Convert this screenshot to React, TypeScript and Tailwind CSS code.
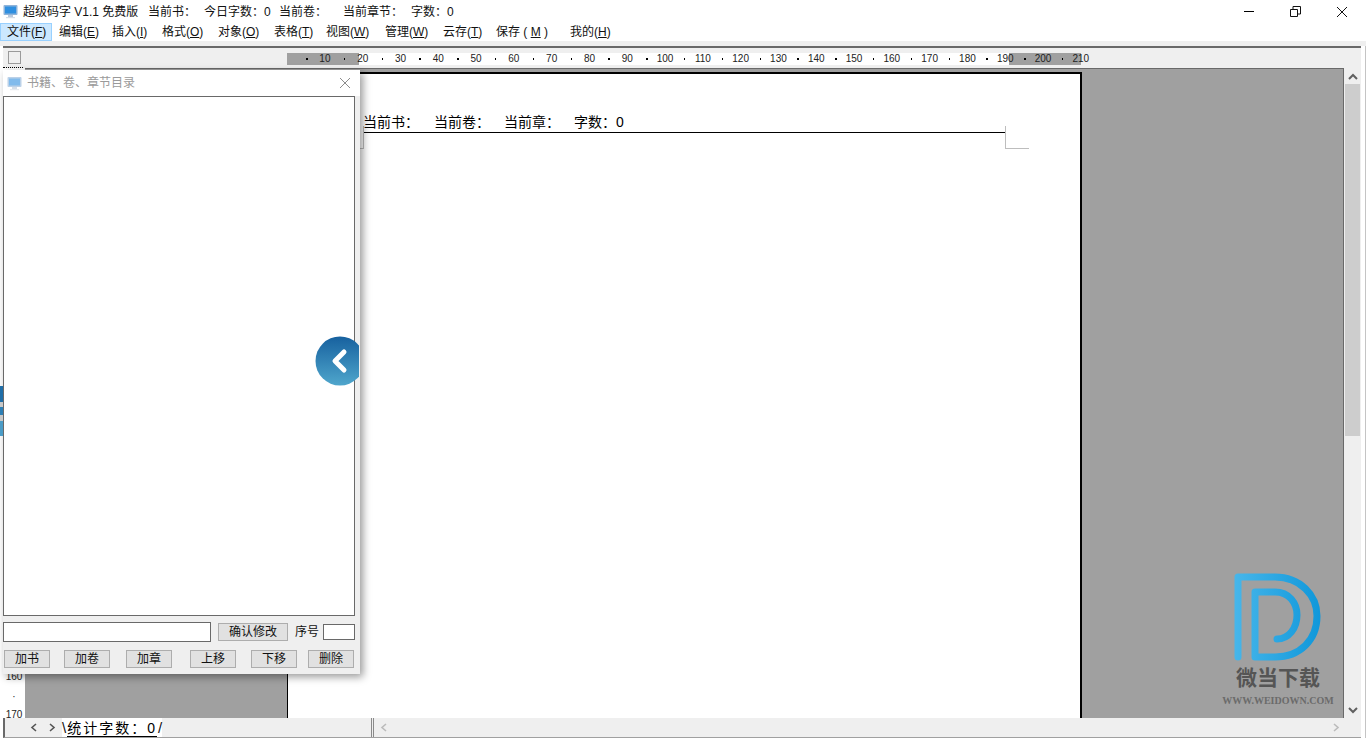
import React from 'react';

const menus = [
  { label: '文件', key: 'F', cls: 'w-[52px] pl-[6px] bg-[#cce8ff] border border-[#99d1ff]' },
  { label: '编辑', key: 'E', cls: 'w-[53px] ml-[7px]' },
  { label: '插入', key: 'I', cls: 'w-[50px]' },
  { label: '格式', key: 'O', cls: 'w-[56px]' },
  { label: '对象', key: 'O', cls: 'w-[56px]' },
  { label: '表格', key: 'T', cls: 'w-[52px]' },
  { label: '视图', key: 'W', cls: 'w-[59px]' },
  { label: '管理', key: 'W', cls: 'w-[58px]' },
  { label: '云存', key: 'T', cls: 'w-[53px]' },
  { label: '保存', key: 'M', cls: 'w-[74px]', spaced: true },
  { label: '我的', key: 'H', cls: 'w-[50px]' },
];

const rulerMarks = Array.from({ length: 21 }, (_, i) => (i + 1) * 10);
const panelButtons = [
  { label: '加书', cls: 'ml-px' },
  { label: '加卷', cls: 'ml-[14px]' },
  { label: '加章', cls: 'ml-[16px]' },
  { label: '上移', cls: 'ml-[18px]' },
  { label: '下移', cls: 'ml-[15px]' },
  { label: '删除', cls: 'ml-[11px]' },
];

function MonitorIcon({ faded }: { faded?: boolean }) {
  return (
    <svg width="15" height="15" viewBox="0 0 15 15" className={faded ? 'opacity-60' : ''}>
      <rect x="0.5" y="1" width="14" height="10" rx="1" fill="#8fb3d9" />
      <rect x="2" y="2.5" width="11" height="7" fill="#2f8fe0" />
      <rect x="5" y="11" width="5" height="2" fill="#b9c9dc" />
      <rect x="3" y="13" width="9" height="1.2" fill="#d5dde6" />
    </svg>
  );
}

function Ruler() {
  return (
    <div className="relative mt-[5px] h-[12px] w-[794px] bg-white">
      <div className="absolute left-0 top-0 h-full w-[72px] bg-[#a0a0a0]" />
      <div className="absolute left-[722px] top-0 h-full w-[72px] bg-[#a0a0a0]" />
      <div className="absolute left-[19px] top-0 flex h-full">
        {rulerMarks.map((n) => (
          <div key={n} className="relative flex w-[37.8px] justify-center text-[10px] leading-[12px] text-[#222]">
            <span className="absolute left-0 top-[5px] h-[2px] w-[1.5px] bg-black" />
            {n}
          </div>
        ))}
      </div>
    </div>
  );
}

function Panel() {
  return (
    <div className="absolute left-[3px] top-[70px] flex h-[604px] w-[357px] flex-col bg-[#efefef] shadow-[3px_3px_8px_rgba(0,0,0,0.4)]">
      <div className="flex h-[26px] items-center bg-white pl-[4px] pr-[9px] text-[12px] text-[#9a9a9a]">
        <MonitorIcon faded />
        <span className="ml-[5px] flex-1">书籍、卷、章节目录</span>
        <svg width="12" height="12" viewBox="0 0 12 12" stroke="#8c8c8c" strokeWidth="1">
          <path d="M1 1 L11 11 M11 1 L1 11" />
        </svg>
      </div>
      <div className="h-[520px] w-[352px] border border-[#696969] bg-white" />
      <div className="mt-[6px] flex h-[20px] items-center">
        <div className="h-[20px] w-[208px] border border-[#696969] bg-white" />
        <div className="ml-[7px] flex h-[18px] w-[70px] items-center justify-center border border-[#adadad] bg-[#e1e1e1] text-[12px] text-[#111]">
          确认修改
        </div>
        <span className="ml-[7px] text-[12px] text-[#111]">序号</span>
        <div className="ml-[4px] h-[16px] w-[32px] border border-[#696969] bg-white" />
      </div>
      <div className="mt-[7px] flex h-[18px] pt-px">
        {panelButtons.map((b) => (
          <div
            key={b.label}
            className={`flex h-[18px] w-[46px] items-center justify-center border border-[#adadad] bg-[#e1e1e1] text-[12px] text-[#111] ${b.cls}`}
          >
            {b.label}
          </div>
        ))}
      </div>
      <svg width="44" height="50" viewBox="0 0 44 50" className="absolute left-[312px] top-[266px]">
        <defs>
          <linearGradient id="circleFill" x1="0" y1="0" x2="0" y2="1">
            <stop offset="0" stopColor="#17619f" />
            <stop offset="1" stopColor="#4fa6cc" />
          </linearGradient>
        </defs>
        <circle cx="25" cy="25" r="24.5" fill="url(#circleFill)" />
        <path d="M29 16 L20 25 L29 34" fill="none" stroke="#fff" strokeWidth="5" strokeLinecap="round" strokeLinejoin="round" />
      </svg>
    </div>
  );
}

function Watermark() {
  return (
    <div className="absolute left-[1220px] top-[570px] flex w-[116px] flex-col items-center">
      <svg width="88" height="92" viewBox="0 0 88 92" fill="none">
        <defs>
          <linearGradient id="logoFill" gradientUnits="userSpaceOnUse" x1="0" y1="0" x2="88" y2="0">
            <stop offset="0" stopColor="#47b6ea" />
            <stop offset="1" stopColor="#0f97da" />
          </linearGradient>
        </defs>
        <path
          d="M4 87 V7 H41 C66 7 83 25 83 46 C83 70 66 87 41 87 H21 V22 H41 C55 22 63 33 63 45 C63 58 55 69 43 69"
          stroke="url(#logoFill)"
          strokeWidth="7"
          strokeLinecap="round"
          strokeLinejoin="round"
        />
      </svg>
      <span className="mt-[5px] text-[21px] font-bold leading-[22px] text-[#555]">微当下载</span>
      <span className="mt-[5px] whitespace-nowrap font-['Liberation_Serif',serif] text-[10px] font-bold leading-[13px] text-[#6b6b6b]">
        WWW.WEIDOWN.COM
      </span>
    </div>
  );
}

export default function App() {
  return (
    <div className="relative flex h-[738px] w-[1366px] flex-col overflow-hidden bg-white font-['Liberation_Sans','Noto_Sans_CJK_SC',sans-serif] text-[12px] text-[#111]">
      {/* title bar */}
      <div className="flex h-[23px] items-center pl-[3px]">
        <MonitorIcon />
        <span className="ml-[5px] w-[125px]">超级码字 V1.1 免费版</span>
        <span className="w-[56px]">当前书：</span>
        <span className="w-[75px]">今日字数：0</span>
        <span className="w-[64px]">当前卷：</span>
        <span className="w-[68px]">当前章节：</span>
        <span>字数：0</span>
        <div className="ml-auto flex items-center">
          <span className="h-px w-[10px] bg-black" />
          <svg width="11" height="11" viewBox="0 0 11 11" fill="none" stroke="#111" className="ml-[36px]">
            <path d="M0.5 3.5 H7.5 V10.5 H0.5 Z M3 3 V0.5 H10.5 V8 H8" />
          </svg>
          <svg width="12" height="12" viewBox="0 0 12 12" stroke="#111" className="ml-[35px] mr-[18px]">
            <path d="M1 1 L11 11 M11 1 L1 11" />
          </svg>
        </div>
      </div>

      {/* menu bar */}
      <div className="flex h-[18px] items-center">
        {menus.map((m) => (
          <div key={m.label} className={`flex h-[18px] shrink-0 items-center ${m.cls}`}>
            {m.label}
            {m.spaced ? (
              <span className="whitespace-pre">
                {' ( '}
                <u>{m.key}</u>
                {' )'}
              </span>
            ) : (
              <span>
                (<u>{m.key}</u>)
              </span>
            )}
          </div>
        ))}
      </div>

      {/* toolbar strip */}
      <div className="h-[5px] bg-[#efefef]" />

      {/* editor frame */}
      <div className="flex min-h-0 flex-1 flex-col border-r border-[#c4c4c4] pl-[3px] pr-[4px]">
        <div className="flex h-[22px] border-t-2 border-[#696969] bg-[#efefef]">
          <div className="h-full w-[20px] border-b border-dotted border-black pl-[5px]">
            <div className="mt-[3px] h-[13px] w-[13px] border border-[#9a9a9a] bg-[#efefef]" />
          </div>
          <div className="ml-[264px] flex">
            <Ruler />
          </div>
        </div>
        <div className="flex min-h-0 flex-1">
          {/* vertical ruler */}
          <div className="flex w-[22px] flex-col items-center justify-end bg-white text-[10px] leading-[10px] text-[#222]">
            <span className="mb-[10px]">160</span>
            <span className="mb-[8px]">·</span>
            <span className="mb-[-2px]">170</span>
          </div>
          {/* work area */}
          <div className="flex min-w-0 flex-1 border-r border-t border-[#696969] bg-[#a0a0a0] pl-[262px] pt-[3px]">
            <div className="h-[700px] w-[795px] border-l border-r-2 border-t-2 border-black bg-white pl-[75px] pt-[39px]">
              <div className="relative w-[642px] border-b border-black pb-[1px] text-[14px] leading-[18px] text-black">
                <div className="flex">
                  <span className="w-[71px]">当前书：</span>
                  <span className="w-[70px]">当前卷：</span>
                  <span className="w-[70px]">当前章：</span>
                  <span>字数：0</span>
                </div>
                <div className="absolute left-[642px] top-[13px] h-[23px] w-[24px] border-b border-l border-[#bdbdbd]" />
                <div className="absolute left-[-4px] top-[13px] h-[23px] w-[5px] border-b border-r border-[#bdbdbd]" />
              </div>
            </div>
          </div>
          {/* vertical scrollbar */}
          <div className="flex w-[17px] flex-col items-center bg-[#efefef] pl-px pr-px">
            <svg width="10" height="16" viewBox="0 0 10 16" fill="none" stroke="#606060" strokeWidth="2">
              <path d="M1 11 L5 7 L9 11" />
            </svg>
            <div className="h-[352px] w-full bg-[#cdcdcd]" />
            <svg width="10" height="16" viewBox="0 0 10 16" fill="none" stroke="#606060" strokeWidth="2" className="mt-auto">
              <path d="M1 6 L5 10 L9 6" />
            </svg>
          </div>
        </div>
        {/* bottom bar */}
        <div className="flex h-[20px] items-center border-b border-l-2 border-b-[#a0a0a0] border-l-[#696969] bg-[#efefef]">
          <svg width="8" height="9" viewBox="0 0 8 9" fill="none" stroke="#555" strokeWidth="1.6" className="ml-[25px]">
            <path d="M6 1 L2 4.5 L6 8" />
          </svg>
          <svg width="8" height="9" viewBox="0 0 8 9" fill="none" stroke="#555" strokeWidth="1.6" className="ml-[10px]">
            <path d="M2 1 L6 4.5 L2 8" />
          </svg>
          <div className="ml-[6px] flex h-[19px] items-center gap-px bg-white">
            <span className="text-[15px] font-light leading-none">\</span>
            <span className="border-b border-black pt-[2px] text-[14px] leading-[16px] tracking-[2px] text-black">统计字数：0</span>
            <span className="text-[15px] font-light leading-none">/</span>
          </div>
          <div className="ml-[209px] h-[19px] w-[3px] border-x border-[#8a8a8a]" />
          <svg width="8" height="9" viewBox="0 0 8 9" fill="none" stroke="#bbb" strokeWidth="1.6" className="ml-[6px]">
            <path d="M6 1 L2 4.5 L6 8" />
          </svg>
          <svg width="8" height="9" viewBox="0 0 8 9" fill="none" stroke="#bbb" strokeWidth="1.6" className="ml-auto mr-[21px]">
            <path d="M2 1 L6 4.5 L2 8" />
          </svg>
        </div>
      </div>

      <Panel />
      <Watermark />

      {/* desktop showing through at the left edge */}
      <div className="absolute left-0 top-[386px] flex h-[50px] w-[3px] flex-col bg-[#c8c8c8]">
        <div className="h-[16px] bg-[#1f6ea8]" />
        <div className="mt-[5px] h-[8px] bg-[#2d7fb5]" />
        <div className="mt-[6px] h-[15px] bg-[#4b9cc7]" />
      </div>
    </div>
  );
}
